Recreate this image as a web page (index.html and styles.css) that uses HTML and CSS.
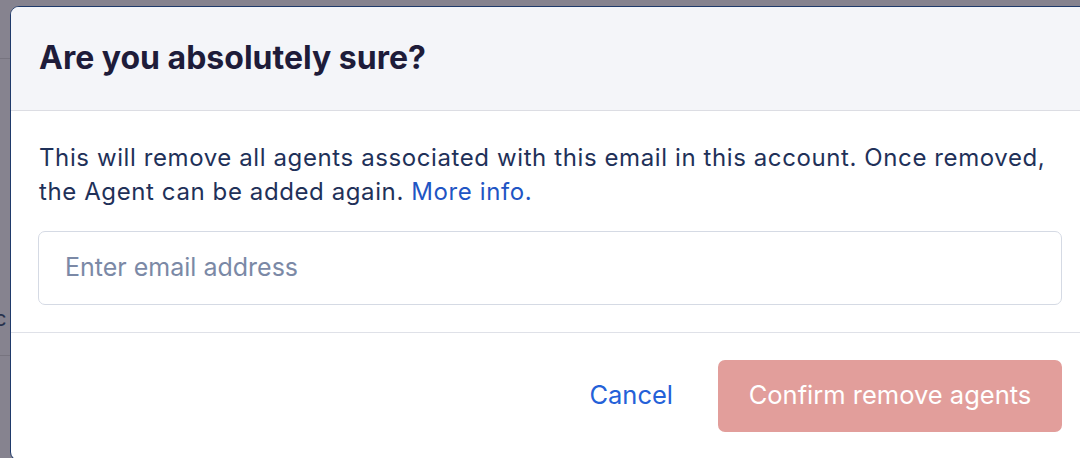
FILE: index.html
```html
<!DOCTYPE html>
<html lang="en">
<head>
<meta charset="utf-8">
<title>Remove agents</title>
<link rel="stylesheet" href="styles.css">
</head>
<body>
<div class="page">
  <div class="page-row page-row-top"></div>
  <div class="page-row page-row-mid"><span class="page-glyph">c</span></div>
</div>
<div class="modal" role="dialog" aria-labelledby="modal-title">
  <div class="modal-header">
    <h2 class="modal-title" id="modal-title">Are you absolutely sure?</h2>
  </div>
  <div class="modal-body">
    <p class="modal-text">This will remove all agents associated with this email in this account. Once removed, the Agent can be added again. <a class="link" href="#">More info.</a></p>
    <input class="email-input" type="text" placeholder="Enter email address">
  </div>
  <div class="modal-footer">
    <button class="btn-cancel" type="button">Cancel</button>
    <button class="btn-confirm" type="button">Confirm remove agents</button>
  </div>
</div>
</body>
</html>
```
FILE: styles.css
```css
* { box-sizing: border-box; }
html, body {
  margin: 0;
  height: 100%;
  overflow: hidden;
}
body {
  background: #86838f;
  font-family: Inter, "Noto Sans", sans-serif;
  position: relative;
}
.page {
  display: flex;
  flex-direction: column;
}
.page-row-top {
  height: 59px;
  border-bottom: 1px solid #77747f;
}
.page-row-mid {
  height: 297px;
  border-bottom: 1px solid #77747f;
  display: flex;
  align-items: center;
  padding-top: 222px;
}
.page-glyph {
  font-size: 22px;
  color: #27324d;
  margin-left: -6px;
  line-height: 1;
}
.modal {
  position: absolute;
  top: 6px;
  left: 10px;
  width: 1082px;
  height: 455px;
  background: #fff;
  border: 1px solid #1f3a6b;
  border-radius: 9px;
  overflow: hidden;
  display: flex;
  flex-direction: column;
}
.modal-header {
  height: 104px;
  flex: none;
  background: #f4f5f9;
  border-bottom: 1px solid #dcdde3;
  display: flex;
  align-items: center;
  padding: 0 28px 2px;
}
.modal-title {
  margin: 0;
  font-size: 32px;
  font-weight: 700;
  color: #1e1c3a;
}
.modal-body {
  flex: none;
  padding: 30px 29px 27px 27px;
  border-bottom: 1px solid #dfe1e8;
}
.modal-text {
  margin: 0 0 22px 1px;
  font-size: 24px;
  line-height: 34px;
  letter-spacing: 0.6px;
  color: #1f3159;
}
.link {
  color: #1f55c4;
  text-decoration: none;
}
.email-input {
  display: block;
  width: 100%;
  height: 74px;
  border: 1px solid #d5dae4;
  border-radius: 7px;
  padding: 0 26px 2px;
  font-family: inherit;
  font-size: 25px;
  color: #1f3159;
  background: #fff;
  outline: none;
}
.email-input::placeholder {
  color: #7b89a6;
}
.modal-footer {
  display: flex;
  justify-content: flex-end;
  align-items: center;
  padding: 27px 29px 0 0;
  gap: 33px;
}
.btn-cancel {
  background: none;
  border: none;
  font-family: inherit;
  font-size: 25.5px;
  color: #2461d8;
  padding: 0 12px 4px;
  height: 72px;
}
.btn-confirm {
  background: #e29e9b;
  border: none;
  border-radius: 7px;
  font-family: inherit;
  font-size: 25.5px;
  color: #fff;
  width: 344px;
  height: 72px;
  padding: 0 0 4px;
}
```
